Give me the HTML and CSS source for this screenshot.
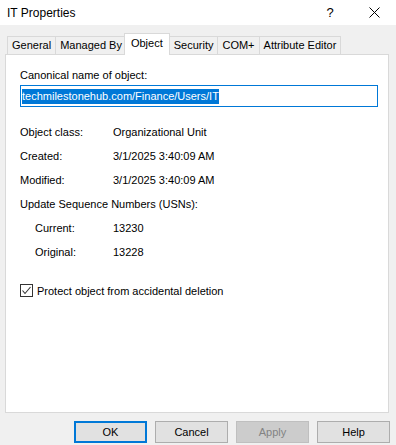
FILE: index.html
```html
<!DOCTYPE html>
<html lang="en">
<head>
    <meta charset="UTF-8">
    <title>IT Properties</title>
    <link rel="stylesheet" href="styles.css">
</head>
<body>
    <div class="window">
        <div class="titlebar">
            <span class="title">IT Properties</span>
            <span class="help-btn">?</span>
            <span class="close-btn">
                <svg width="11" height="11" viewBox="0 0 11 11">
                    <path d="M0.5 0.5 L10.5 10.5 M10.5 0.5 L0.5 10.5" stroke="#000" stroke-width="1" fill="none"/>
                </svg>
            </span>
        </div>

        <div class="tabs">
            <div class="tab">General</div>
            <div class="tab">Managed By</div>
            <div class="tab active">Object</div>
            <div class="tab">Security</div>
            <div class="tab">COM+</div>
            <div class="tab">Attribute Editor</div>
        </div>

        <div class="panel">
            <div class="field-label">Canonical name of object:</div>
            <div class="textbox"><span class="selected">techmilestonehub.com/Finance/Users/IT</span></div>

            <div class="info">
                <div class="row"><span class="key">Object class:</span><span>Organizational Unit</span></div>
                <div class="row"><span class="key">Created:</span><span>3/1/2025 3:40:09 AM</span></div>
                <div class="row"><span class="key">Modified:</span><span>3/1/2025 3:40:09 AM</span></div>
                <div class="row">Update Sequence Numbers (USNs):</div>
                <div class="row sub"><span class="key">Current:</span><span>13230</span></div>
                <div class="row sub"><span class="key">Original:</span><span>13228</span></div>
            </div>

            <label class="check-row">
                <span class="checkbox">
                    <svg width="11" height="11" viewBox="0 0 11 11">
                        <path d="M1.5 5.5 L4 8.5 L9.5 2" stroke="#333" stroke-width="1.1" fill="none"/>
                    </svg>
                </span>
                Protect object from accidental deletion
            </label>
        </div>

        <div class="buttons">
            <button class="btn default">OK</button>
            <button class="btn">Cancel</button>
            <button class="btn" disabled>Apply</button>
            <button class="btn">Help</button>
        </div>
    </div>
</body>
</html>
```

FILE: styles.css
```css
body {
    margin: 0;
    padding: 0;
    background-color: #f0f0f0;
    font-family: "Liberation Sans", Arial, sans-serif;
    font-size: 11px;
    color: #000;
}

.window {
    width: 396px;
    height: 445px;
    overflow: hidden;
}

.titlebar {
    height: 25px;
    background-color: #fff;
    display: flex;
    align-items: center;
    padding-left: 7px;
}

.title {
    font-size: 12px;
    flex: 1;
}

.help-btn {
    font-size: 13px;
    width: 10px;
    text-align: center;
    margin-right: 34px;
}

.close-btn {
    display: flex;
    margin-right: 16px;
}

.tabs {
    display: flex;
    align-items: flex-end;
    height: 20px;
    margin-top: 9px;
    padding-left: 7px;
}

.tab {
    height: 17px;
    line-height: 17px;
    padding: 0 4px;
    border: 1px solid #d9d9d9;
    border-bottom: none;
    margin-right: -1px;
    background-color: #f0f0f0;
}

.tab.active {
    height: 21px;
    line-height: 19px;
    margin: 0 -1px -1px -2px;
    padding: 0 6px;
    background-color: #fff;
    position: relative;
    z-index: 1;
}

.panel {
    width: 368px;
    height: 344px;
    margin-left: 5px;
    padding: 13px 0 0 14px;
    background-color: #fff;
    border: 1px solid #d9d9d9;
}

.field-label {
    line-height: 14px;
}

.textbox {
    width: 355px;
    height: 20px;
    margin-top: 3px;
    border: 1px solid #0078d7;
    padding-left: 1px;
    display: flex;
    align-items: center;
}

.selected {
    background-color: #0078d7;
    color: #fff;
    line-height: 15px;
}

.info {
    margin-top: 13px;
}

.row {
    display: flex;
    height: 24px;
    align-items: center;
}

.key {
    width: 93px;
}

.row.sub {
    padding-left: 15px;
}

.row.sub .key {
    width: 78px;
}

.check-row {
    display: flex;
    align-items: center;
    margin-top: 20px;
}

.checkbox {
    width: 11px;
    height: 11px;
    border: 1px solid #333;
    margin-right: 4px;
    display: flex;
}

.buttons {
    display: flex;
    justify-content: flex-end;
    gap: 8px;
    margin-top: 8px;
    padding-right: 6px;
}

.btn {
    width: 73px;
    height: 22px;
    background-color: #e1e1e1;
    border: 1px solid #adadad;
    font-family: "Liberation Sans", Arial, sans-serif;
    font-size: 11px;
    color: #000;
    padding: 0;
}

.btn.default {
    border: 2px solid #0078d7;
}

.btn:disabled {
    background-color: #cccccc;
    border-color: #bfbfbf;
    color: #838383;
}
```
